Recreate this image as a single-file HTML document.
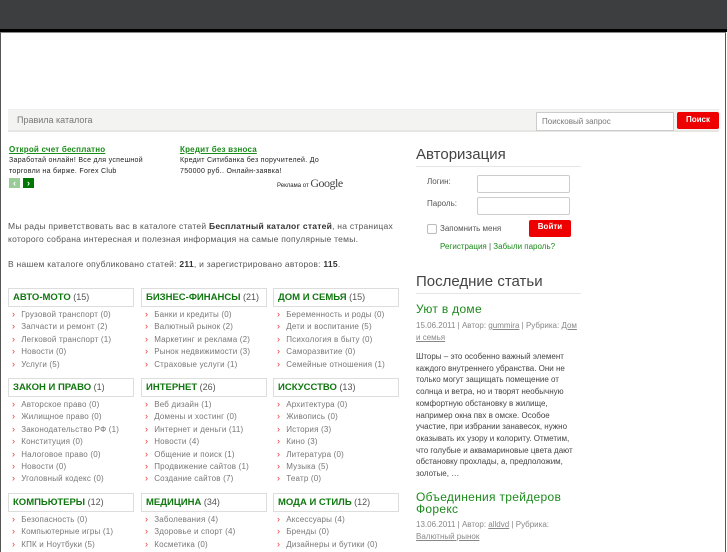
<!DOCTYPE html>
<html><head><meta charset="utf-8"><style>
*{margin:0;padding:0;box-sizing:border-box}
body{width:727px;height:545px;overflow:hidden;background:#fff;font-family:"Liberation Sans",sans-serif;color:#555;position:relative;font-size:8px}
.top{position:absolute;left:0;top:0;width:727px;height:29px;background:#3d3e3f}
.blk{position:absolute;left:0;top:29px;width:727px;height:3px;background:#000}
.frame{position:absolute;left:0;top:32px;width:726px;height:520px;border-left:1px solid #555;border-right:1px solid #555;border-top:1px solid #888}
.a{position:absolute;white-space:nowrap}
.nav{position:absolute;left:8px;top:109px;width:711px;height:23px;background:#f3f3f1;border-top:1px solid #eee;border-bottom:2px solid #e6e6e4}
.g{color:#1a8a1a}
.box{position:absolute;width:126px;height:19px;border:1px solid #ddd;font-size:9px;padding:3px 4px;white-space:nowrap}
.box b{color:#117711;font-size:9.5px}
ul{position:absolute;list-style:none;font-size:8px;color:#777;letter-spacing:0.2px}
li{height:12.4px;line-height:12px;white-space:nowrap}
li:before{content:"›";color:#e33;margin:0 6px 0 4px;font-size:9px}
h2{position:absolute;font-weight:normal;font-size:15px;color:#444;border-bottom:1px solid #e5e5e5;width:165px;padding-bottom:3px}
input.t{position:absolute;border:1px solid #ccc;border-radius:2px;background:#fff}
.btn{position:absolute;background:#e00;color:#fff;font-weight:bold;font-size:8px;text-align:center;border-radius:2px}
.p{position:absolute;left:416px;font-size:8px;line-height:11.7px;color:#444;letter-spacing:0.2px;white-space:nowrap}
</style></head><body>
<div class="top"></div><div class="blk"></div><div class="frame"></div>
<div class="nav"></div>
<div class="a" style="left:17px;top:115px;font-size:9px;color:#777">Правила каталога</div>
<div class="a" style="left:536px;top:112px;width:138px;height:19px;border:1px solid #ccc;background:#fff;font-size:8px;color:#777;padding:4px 5px">Поисковый запрос</div>
<div class="btn" style="left:677px;top:112px;width:42px;height:17px;line-height:15px">Поиск</div>

<div class="a g" style="left:9px;top:145px;font-size:8px;font-weight:bold;text-decoration:underline;letter-spacing:0.2px">Открой счет бесплатно</div>
<div class="a" style="left:9px;top:155px;font-size:7px;line-height:11px;color:#222;letter-spacing:0.3px">Заработай онлайн! Все для успешной<br>торговли на бирже. Forex Club</div>
<div class="a" style="left:9px;top:178px;width:11px;height:10px;background:#9c9;color:#fff;font-size:9px;font-weight:bold;text-align:center;line-height:10px">‹</div>
<div class="a" style="left:23px;top:178px;width:11px;height:10px;background:#070;color:#fff;font-size:9px;font-weight:bold;text-align:center;line-height:10px">›</div>
<div class="a g" style="left:180px;top:145px;font-size:8px;font-weight:bold;text-decoration:underline;letter-spacing:0.2px">Кредит без взноса</div>
<div class="a" style="left:180px;top:155px;font-size:7px;line-height:11px;color:#222;letter-spacing:0.3px">Кредит Ситибанка без поручителей. До<br>750000 руб.. Онлайн-заявка!</div>
<div class="a" style="left:277px;top:176px;font-size:6px;color:#222">Реклама от <span style="font-family:'Liberation Serif',serif;font-size:12px;color:#444;letter-spacing:-0.5px">Google</span></div>

<div class="a" style="left:8px;top:220px;font-size:8.5px;line-height:13px;color:#555;letter-spacing:0.25px">Мы рады приветствовать вас в каталоге статей <b style="color:#333">Бесплатный каталог статей</b>, на страницах<br>которого собрана интересная и полезная информация на самые популярные темы.</div>
<div class="a" style="left:8px;top:259px;font-size:8.5px;color:#555;letter-spacing:0.25px">В нашем каталоге опубликовано статей: <b style="color:#333">211</b>, и зарегистрировано авторов: <b style="color:#333">115</b>.</div>

<div class="box" style="left:8px;top:288px"><b>АВТО-МОТО</b> (15)</div>
<ul style="left:8px;top:308px"><li>Грузовой транспорт (0)</li><li>Запчасти и ремонт (2)</li><li>Легковой транспорт (1)</li><li>Новости (0)</li><li>Услуги (5)</li></ul>
<div class="box" style="left:141px;top:288px"><b>БИЗНЕС-ФИНАНСЫ</b> (21)</div>
<ul style="left:141px;top:308px"><li>Банки и кредиты (0)</li><li>Валютный рынок (2)</li><li>Маркетинг и реклама (2)</li><li>Рынок недвижимости (3)</li><li>Страховые услуги (1)</li></ul>
<div class="box" style="left:273px;top:288px"><b>ДОМ И СЕМЬЯ</b> (15)</div>
<ul style="left:273px;top:308px"><li>Беременность и роды (0)</li><li>Дети и воспитание (5)</li><li>Психология в быту (0)</li><li>Саморазвитие (0)</li><li>Семейные отношения (1)</li></ul>

<div class="box" style="left:8px;top:378px"><b>ЗАКОН И ПРАВО</b> (1)</div>
<ul style="left:8px;top:398px"><li>Авторское право (0)</li><li>Жилищное право (0)</li><li>Законодательство РФ (1)</li><li>Конституция (0)</li><li>Налоговое право (0)</li><li>Новости (0)</li><li>Уголовный кодекс (0)</li></ul>
<div class="box" style="left:141px;top:378px"><b>ИНТЕРНЕТ</b> (26)</div>
<ul style="left:141px;top:398px"><li>Веб дизайн (1)</li><li>Домены и хостинг (0)</li><li>Интернет и деньги (11)</li><li>Новости (4)</li><li>Общение и поиск (1)</li><li>Продвижение сайтов (1)</li><li>Создание сайтов (7)</li></ul>
<div class="box" style="left:273px;top:378px"><b>ИСКУССТВО</b> (13)</div>
<ul style="left:273px;top:398px"><li>Архитектура (0)</li><li>Живопись (0)</li><li>История (3)</li><li>Кино (3)</li><li>Литература (0)</li><li>Музыка (5)</li><li>Театр (0)</li></ul>

<div class="box" style="left:8px;top:493px"><b>КОМПЬЮТЕРЫ</b> (12)</div>
<ul style="left:8px;top:513px"><li>Безопасность (0)</li><li>Компьютерные игры (1)</li><li>КПК и Ноутбуки (5)</li></ul>
<div class="box" style="left:141px;top:493px"><b>МЕДИЦИНА</b> (34)</div>
<ul style="left:141px;top:513px"><li>Заболевания (4)</li><li>Здоровье и спорт (4)</li><li>Косметика (0)</li></ul>
<div class="box" style="left:273px;top:493px"><b>МОДА И СТИЛЬ</b> (12)</div>
<ul style="left:273px;top:513px"><li>Аксессуары (4)</li><li>Бренды (0)</li><li>Дизайнеры и бутики (0)</li></ul>

<h2 style="left:416px;top:146px">Авторизация</h2>
<div class="a" style="left:427px;top:177px;font-size:8px;color:#555">Логин:</div>
<input class="t" style="left:477px;top:175px;width:93px;height:18px">
<div class="a" style="left:427px;top:199px;font-size:8px;color:#555">Пароль:</div>
<input class="t" style="left:477px;top:197px;width:93px;height:18px">
<div class="a" style="left:427px;top:224px;width:10px;height:10px;border:1px solid #bbb;border-radius:2px"></div>
<div class="a" style="left:440px;top:224px;font-size:8px;color:#555">Запомнить меня</div>
<div class="btn" style="left:529px;top:220px;width:42px;height:17px;line-height:14px">Войти</div>
<div class="a g" style="left:440px;top:242px;font-size:8px">Регистрация <span style="color:#555">|</span> Забыли пароль?</div>

<h2 style="left:416px;top:273px">Последние статьи</h2>
<div class="a g" style="left:416px;top:302px;font-size:12px;letter-spacing:0.3px">Уют в доме</div>
<div class="p" style="top:320px;color:#888;letter-spacing:0">15.06.2011 | Автор: <u>gummira</u> | Рубрика: <u>Дом</u><br><u>и семья</u></div>
<div class="p" style="top:351px;letter-spacing:0">Шторы – это особенно важный элемент<br>каждого внутреннего убранства. Они не<br>только могут защищать помещение от<br>солнца и ветра, но и творят необычную<br>комфортную обстановку в жилище,<br>например окна пвх в омске. Особое<br>участие, при избрании занавесок, нужно<br>оказывать их узору и колориту. Отметим,<br>что голубые и аквамариновые цвета дают<br>обстановку прохлады, а, предположим,<br>золотые, …</div>
<div class="a g" style="left:416px;top:491px;font-size:12px;line-height:12px;letter-spacing:0.3px">Объединения трейдеров<br>Форекс</div>
<div class="p" style="top:519px;color:#888;letter-spacing:0">13.06.2011 | Автор: <u>alldvd</u> | Рубрика:<br><u>Валютный рынок</u></div>
</body></html>
